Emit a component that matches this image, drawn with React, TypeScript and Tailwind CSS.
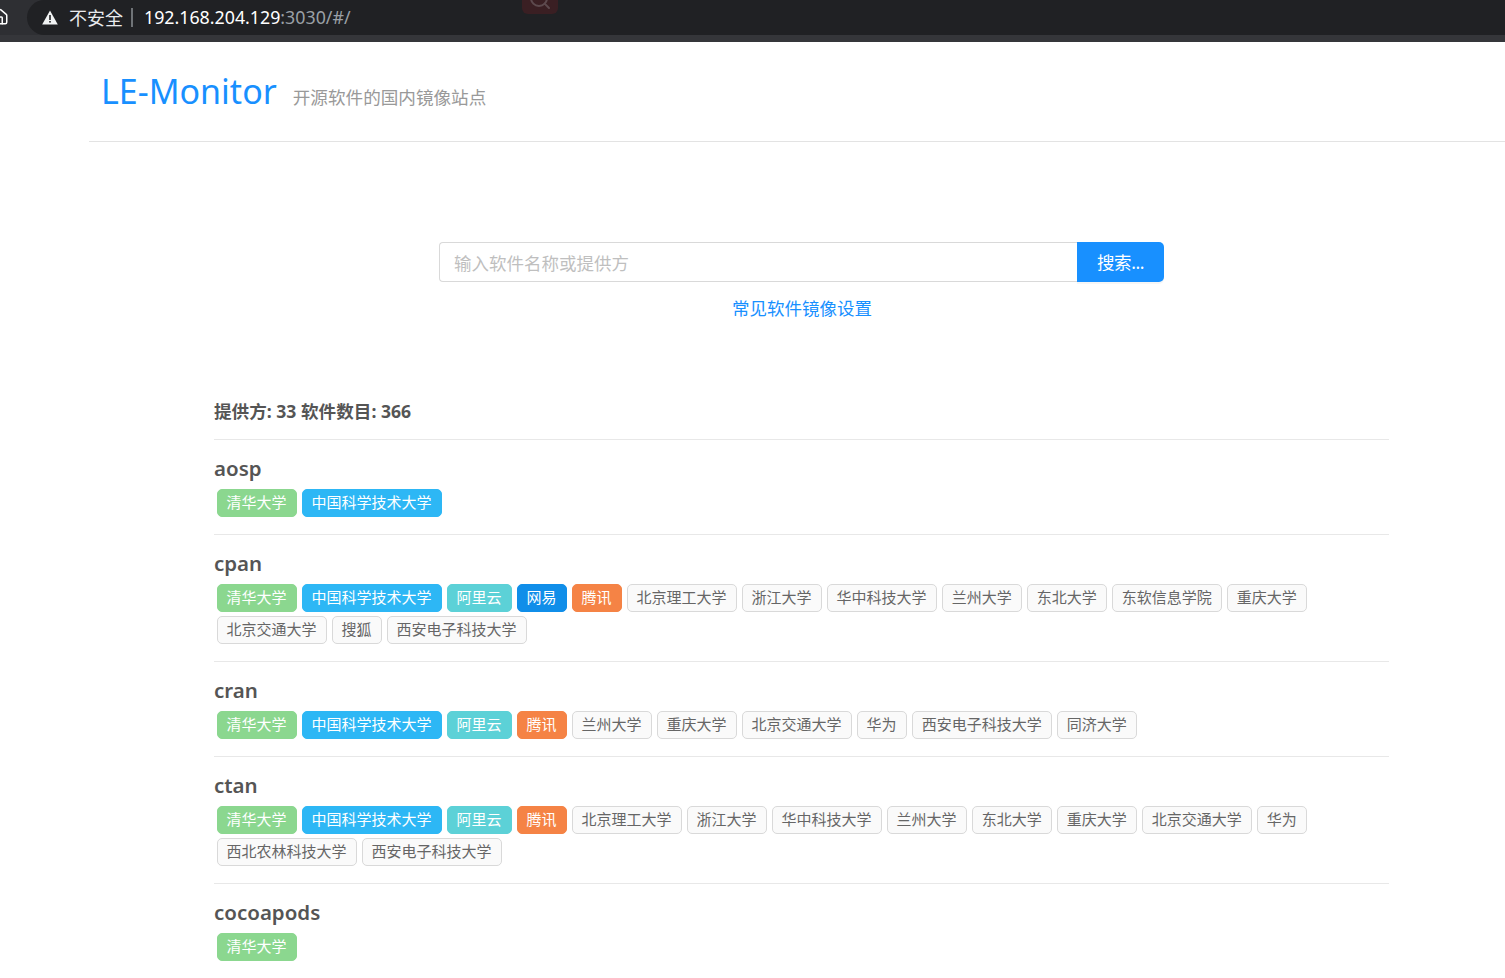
import { Home, Search } from "lucide-react";

type Provider = { name: string };

const pick: Record<string, string> = {
  清华大学: "bg-[#8bd78f] border-[#8bd78f] text-white",
  中国科学技术大学: "bg-[#2db7f5] border-[#2db7f5] text-white",
  阿里云: "bg-[#5cd1d7] border-[#5cd1d7] text-white",
  网易: "bg-[#108ee9] border-[#108ee9] text-white",
  腾讯: "bg-[#f58345] border-[#f58345] text-white",
};

const groups: { name: string; tags: string[] }[] = [
  { name: "aosp", tags: ["清华大学", "中国科学技术大学"] },
  {
    name: "cpan",
    tags: ["清华大学", "中国科学技术大学", "阿里云", "网易", "腾讯", "北京理工大学", "浙江大学", "华中科技大学", "兰州大学", "东北大学", "东软信息学院", "重庆大学", "北京交通大学", "搜狐", "西安电子科技大学"],
  },
  {
    name: "cran",
    tags: ["清华大学", "中国科学技术大学", "阿里云", "腾讯", "兰州大学", "重庆大学", "北京交通大学", "华为", "西安电子科技大学", "同济大学"],
  },
  {
    name: "ctan",
    tags: ["清华大学", "中国科学技术大学", "阿里云", "腾讯", "北京理工大学", "浙江大学", "华中科技大学", "兰州大学", "东北大学", "重庆大学", "北京交通大学", "华为", "西北农林科技大学", "西安电子科技大学"],
  },
  { name: "cocoapods", tags: ["清华大学"] },
];

function Tag({ name }: Provider) {
  const tone = pick[name] ?? "bg-[#fafafa] border-[#d9d9d9] text-[#666666]";
  return (
    <span className={`flex h-7 items-center rounded-[5px] border pr-[9.5px] pb-[2px] pl-[8.5px] text-[15px] leading-none ${tone}`}>
      {name}
    </span>
  );
}

function BrowserBar() {
  return (
    <div className="relative h-[42px] overflow-hidden bg-[#35363a]">
      <div className="flex h-[35px] bg-[#2e2f33]">
        <Home size={18} className="mt-[8px] ml-[-9px] shrink-0 text-white" />
        <div className="ml-[18px] flex h-[35px] flex-1 items-center rounded-l-[18px] bg-[#202124] pl-[15px] text-[18px] leading-none">
          <svg width="16" height="15" viewBox="0 0 16 15" className="shrink-0">
            <path d="M8 0.5 15.8 14.5H0.2Z" fill="#f1f3f4" />
            <rect x="7.2" y="5" width="1.6" height="5" fill="#202124" />
            <rect x="7.2" y="11" width="1.6" height="1.6" fill="#202124" />
          </svg>
          <span className="ml-[11px] text-[#e8eaed]">不安全</span>
          <span className="ml-2 h-[19px] w-0.5 bg-[#6f7377]" />
          <span className="ml-[11px] text-[17.8px] text-white">192.168.204.129</span>
          <span className="text-[17.8px] text-[#9aa0a6]">:3030/#/</span>
        </div>
      </div>
      <div className="absolute top-0 left-[522px] h-[14px] w-9 overflow-hidden rounded-b-md bg-[#3a1f23]">
        <Search size={24} className="absolute -top-[13px] left-[6px] text-[#5d4a4e]" />
      </div>
    </div>
  );
}

export default function App() {
  return (
    <div className="h-[978px] overflow-hidden bg-white font-['Noto_Sans','Noto_Sans_CJK_SC',sans-serif]">
      <BrowserBar />

      <header className="ml-[89px] flex h-[100px] items-end border-b border-[#e3e3e3] pb-[30px] pl-3">
        <h1 className="text-[34px] leading-[40px] font-normal text-[#1890ff]">LE-Monitor</h1>
        <span className="mb-[2px] ml-4 text-[17.6px] leading-6 text-[#999999]">开源软件的国内镜像站点</span>
      </header>

      <div className="mt-[100px] ml-[439px] flex h-10 w-[725px]">
        <input
          readOnly
          placeholder="输入软件名称或提供方"
          className="min-w-0 flex-1 rounded-l border border-r-0 border-[#d9d9d9] bg-white px-[14px] pt-[2px] text-[17.5px] outline-none placeholder:text-[#bfbfbf]"
        />
        <button className="w-[87px] rounded-r-[5px] bg-[#1890ff] text-[17.5px] tracking-[-0.4px] text-white shadow-[0_2px_0_rgba(0,0,0,0.035)]">
          搜索...
        </button>
      </div>

      <div className="mt-[14px] ml-[89px] w-[1426px] text-center text-[17.5px] leading-6 text-[#1890ff]">
        常见软件镜像设置
      </div>

      <main className="mt-[78px] ml-[214px] w-[1175px] text-[#555555]">
        <div className="flex h-[28px] items-center pb-[2px] text-[17.6px] font-bold">提供方: 33 软件数目: 366</div>
        <div className="mt-[13px]">
          {groups.map((group, index) => (
            <section key={group.name} className={index === 0 ? "border-t border-[#e8e8e8]" : "mt-[17px] border-t border-[#e8e8e8]"}>
              <h2 className="mt-[14px] h-[28px] text-[20.5px] leading-[28px] font-semibold">{group.name}</h2>
              <div className="mt-[7px] flex flex-wrap gap-x-[5px] gap-y-1 pl-[3px]">
                {group.tags.map((tag) => (
                  <Tag key={tag} name={tag} />
                ))}
              </div>
            </section>
          ))}
        </div>
      </main>
    </div>
  );
}
